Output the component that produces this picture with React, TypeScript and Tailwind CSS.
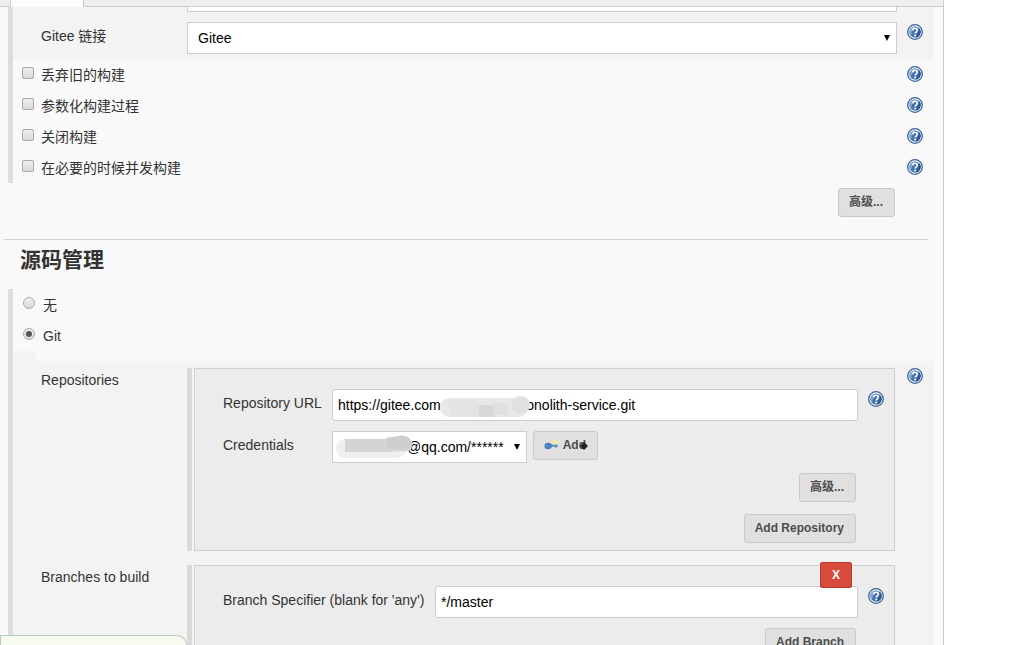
import { ReactNode, useState } from "react";
import clsx from "clsx";

const jobOptions = [
  { id: "discard", label: "丢弃旧的构建" },
  { id: "params", label: "参数化构建过程" },
  { id: "disable", label: "关闭构建" },
  { id: "concurrent", label: "在必要的时候并发构建" },
];

const scmOptions = [
  { id: "none", label: "无" },
  { id: "git", label: "Git" },
];

const HelpButton = ({ className }: { className?: string }) => (
  <button type="button" aria-label="Help" className={clsx("block size-4 shrink-0", className)}>
    <svg viewBox="0 0 16 16" className="size-4">
      <circle cx="8" cy="8" r="7.3" fill="#f4f8fc" stroke="#3c6397" strokeWidth="1.3" />
      <circle cx="8" cy="8" r="5.6" fill="#4674ae" />
      <path d="M4 12A5.600 5.600 0 0 1 8 2.400C5.500 4.500 4.500 8 4 12z" fill="#86a8d0" />
      <path d="M12 4a5.600 5.600 0 0 1-4 9.600c2.500-2 3.800-5 4-9.600z" fill="#2b558f" />
      <path
        d="M5.800 6.400C5.800 4.900 6.800 4.300 8 4.300s2.300.7 2.300 2c0 1.500-2.100 1.500-2.100 3.200"
        fill="none"
        stroke="#fff"
        strokeWidth="1.600"
      />
      <circle cx="8.200" cy="11.500" r="1" fill="#fff" />
    </svg>
  </button>
);

const GrayButton = ({ children, className }: { children: ReactNode; className?: string }) => (
  <button
    type="button"
    className={clsx(
      "h-[29px] rounded-[3px] border border-[#c9c9c9] bg-[#e0e0e0] pr-[11px] pb-[2px] pl-[10px] text-xs font-bold text-[#4d4d4d]",
      className,
    )}
  >
    {children}
  </button>
);

const Arrow = ({ className }: { className?: string }) => (
  <svg viewBox="0 0 6 6" className={clsx("pointer-events-none absolute size-[6px]", className)}>
    <path d="M0 0h6L3 6z" fill="#000" />
  </svg>
);

const KeyIcon = () => (
  <svg viewBox="0 0 16 16" className="size-4">
    <path d="M9 3h5l1 4H9z" fill="#f5e9a0" />
    <path d="M7 7.500h8v2.500h-1.500v1H12v-1H7z" fill="#4f87bd" />
    <path d="M8 7h7v1.300H8z" fill="#a9c8e2" />
    <ellipse cx="4.500" cy="9" rx="4" ry="3.500" fill="#4a7fbb" />
    <circle cx="3.300" cy="8.800" r="1" fill="#6d9fd2" />
  </svg>
);

const FormPanel = ({ children }: { children: ReactNode }) => (
  <div className="mr-[2px] flex-1 border-l-[5px] border-[#d9d9d9] pl-[2px]">
    <div className="relative border border-[#cfcfcf] bg-[#ececec] pl-7">{children}</div>
  </div>
);

const inputClass =
  "h-8 w-full rounded-[3px] border border-[#ccc] bg-white px-[5px] text-sm text-black outline-none";

const App = () => {
  const [scm, setScm] = useState("git");
  const [checked, setChecked] = useState<string[]>([]);
  const [repoUrl, setRepoUrl] = useState(`https://gitee.com${" ".repeat(22)}onolith-service.git`);
  const [branch, setBranch] = useState("*/master");

  const toggle = (id: string) =>
    setChecked((prev) => (prev.includes(id) ? prev.filter((item) => item !== id) : [...prev, id]));

  return (
    <div className="h-screen overflow-hidden bg-white font-['Liberation_Sans','Noto_Sans_CJK_SC',sans-serif] text-sm text-[#333]">
      <main className="mr-[76px] min-h-screen border-r border-[#ccc] bg-[#f9f9f9]">
        <div className="flex h-[7px] border-b border-[#ccc] bg-[#eee] pl-[10px]">
          <div className="h-[7px] w-[74px] border-x border-[#ccc] bg-[#fcfcfc]" />
        </div>

        <section className="mr-[10px] ml-2 border-l-[5px] border-[#ddd]">
          <div className="flex h-[52px] bg-[#f3f3f3] pl-7">
            <label htmlFor="gitee" className="w-[146px] pt-[19px] leading-5">
              Gitee 链接
            </label>
            <div className="flex-1">
              <div className="h-[5px] border-x border-b border-[#ccc] bg-white" />
              <div className="relative mt-[10px]">
                <select
                  id="gitee"
                  className="h-8 w-full appearance-none border border-[#ccc] bg-white px-[10px] text-sm text-black"
                >
                  <option>Gitee</option>
                </select>
                <Arrow className="top-[13px] right-[7px]" />
              </div>
            </div>
            <div className="w-9 pt-[17px] pl-[10px]">
              <HelpButton />
            </div>
          </div>
          {jobOptions.map(({ id, label }) => (
            <div key={id} className="flex h-[31px] justify-between pr-[10px] pl-[9px]">
              <label className="flex items-center gap-[7px]">
                <input
                  type="checkbox"
                  checked={checked.includes(id)}
                  onChange={() => toggle(id)}
                  className="mb-1 size-3 appearance-none rounded-[2px] border border-[#a8a8a8] bg-linear-to-b from-[#eee] to-[#d9d9d9] checked:from-[#666]"
                />
                <span className="leading-5">{label}</span>
              </label>
              <HelpButton className="mt-[7px]" />
            </div>
          ))}
        </section>

        <div className="mt-[5px] mr-12 flex justify-end">
          <GrayButton>高级...</GrayButton>
        </div>

        <hr className="mt-[22px] mr-[15px] ml-1 border-[#d5d5d5]" />
        <h2 className="mt-[5px] ml-5 text-[21px] leading-[30px] font-bold">源码管理</h2>

        <section className="mt-[14px] mr-[10px] ml-2 border-l-[5px] border-[#ddd]">
          {scmOptions.map(({ id, label }) => (
            <label key={id} className="flex h-[31px] items-center gap-2 pl-[10px]">
              <input
                type="radio"
                name="scm"
                checked={scm === id}
                onChange={() => setScm(id)}
                className="mb-1 grid size-3 appearance-none place-items-center rounded-full border border-[#a8a8a8] bg-linear-to-b from-[#eee] to-[#dcdcdc] checked:before:size-[6px] checked:before:rounded-full checked:before:bg-[#555]"
              />
              <span className="leading-5">{label}</span>
            </label>
          ))}

          <div className="bg-[#f3f3f3]">
            <div className="ml-[23px] h-[10px] bg-[#f9f9f9]" />
            <div className="flex pt-[7px] pl-7">
              <div className="w-[146px] pt-[2px] leading-5">Repositories</div>
              <FormPanel>
                <div className="flex pt-5">
                  <label htmlFor="repo-url" className="w-[109px] pt-1 leading-5">
                    Repository URL
                  </label>
                  <div className="relative flex-1">
                    <input
                      id="repo-url"
                      value={repoUrl}
                      onChange={(e) => setRepoUrl(e.target.value)}
                      className={inputClass}
                    />
                    {/* smudge over the account part of the url */}
                    <svg viewBox="0 0 92 24" className="pointer-events-none absolute top-[6px] left-[107px] h-6 w-[92px]">
                      <rect x="1" y="3" width="88" height="19" rx="9" fill="#e8e8e8" />
                      <path d="M8 5h26l6 5v10H12z" fill="#e3e3e3" />
                      <path d="M40 10h15v12H40z" fill="#d8d8d8" />
                      <path d="M55 8h14v12H55z" fill="#e0e0e0" />
                      <circle cx="82" cy="10" r="9" fill="#e0e0e0" />
                    </svg>
                  </div>
                  <HelpButton className="mx-[10px] mt-[2px]" />
                </div>
                <div className="mt-[10px] flex">
                  <label htmlFor="credentials" className="w-[109px] pt-1 leading-5">
                    Credentials
                  </label>
                  <div className="relative">
                    <select
                      id="credentials"
                      className="h-8 w-[195px] appearance-none border border-[#ccc] bg-white pl-[74px] text-sm text-black"
                    >
                      <option>@qq.com/******</option>
                    </select>
                    <svg viewBox="0 0 80 26" className="pointer-events-none absolute top-[3px] left-1 h-[26px] w-20">
                      <rect x="0" y="5" width="70" height="19" rx="9" fill="#efefef" />
                      <path d="M9 5h44l10-3c8-1 13 3 13 9s-4 7-10 6l-14 1H9z" fill="#d4d4d4" />
                      <path d="M50 4l13-2c8-1 13 3 13 9l-6 4H52z" fill="#cecece" />
                    </svg>
                    <Arrow className="top-[13px] right-[7px]" />
                  </div>
                  <GrayButton className="relative ml-[6px] flex w-[65px] items-center gap-1">
                    <KeyIcon />
                    Add
                    <svg viewBox="0 0 8 8" className="pointer-events-none absolute top-[10px] right-[9px] size-2">
                      <path d="M4 0l4 4-4 4-4-4z" fill="#222" />
                    </svg>
                  </GrayButton>
                </div>
                <div className="mt-[10px] mr-[38px] mb-[7px] flex flex-col items-end gap-3">
                  <GrayButton>高级...</GrayButton>
                  <GrayButton>Add Repository</GrayButton>
                </div>
              </FormPanel>
              <div className="w-9 pl-[10px]">
                <HelpButton />
              </div>
            </div>

            <div className="mt-[14px] flex pl-7">
              <div className="w-[146px] pt-[2px] leading-5">Branches to build</div>
              <FormPanel>
                <button
                  type="button"
                  className="absolute -top-1 right-[42px] h-[26px] w-8 rounded-[2px] border border-[#b73b2f] bg-[#d84a3c] text-xs font-bold text-white"
                >
                  X
                </button>
                <div className="flex pt-5">
                  <label htmlFor="branch" className="w-[212px] pt-1 leading-5">
                    Branch Specifier (blank for 'any')
                  </label>
                  <div className="flex-1">
                    <input
                      id="branch"
                      value={branch}
                      onChange={(e) => setBranch(e.target.value)}
                      className={inputClass}
                    />
                  </div>
                  <HelpButton className="mx-[10px] mt-[2px]" />
                </div>
                <div className="mt-[10px] mr-[38px] mb-[7px] flex justify-end">
                  <GrayButton>Add Branch</GrayButton>
                </div>
              </FormPanel>
              <div className="w-9" />
            </div>
          </div>
        </section>
      </main>

      <div className="fixed bottom-0 left-0 h-[10px] w-[187px] rounded-tr-[10px] border-t border-r border-l border-[#b5cdb5] bg-[#f7faf1]" />
    </div>
  );
};

export default App;
